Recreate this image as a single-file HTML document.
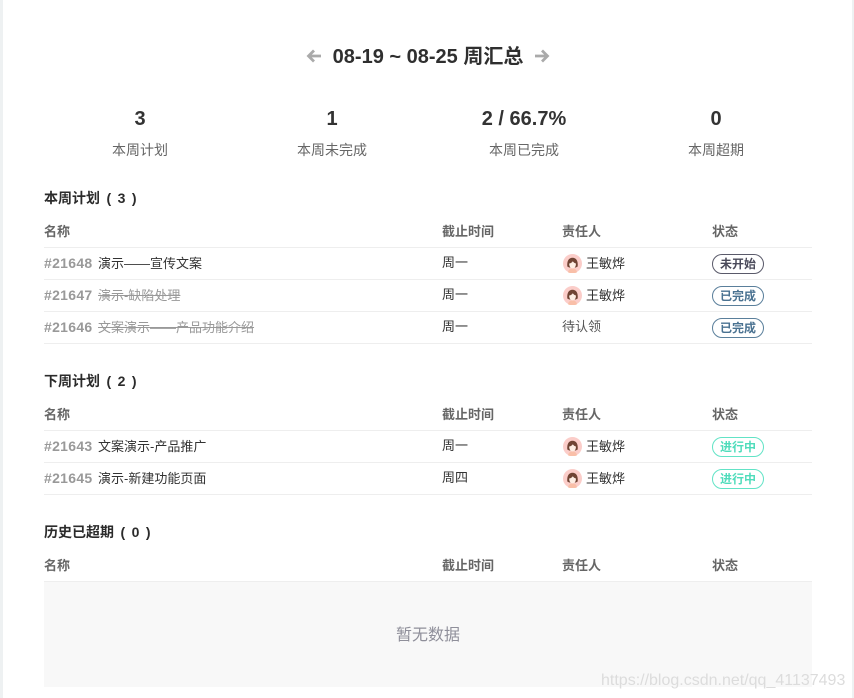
<!DOCTYPE html>
<html lang="zh">
<head>
<meta charset="utf-8">
<style>
html,body{margin:0;padding:0;background:#fff}
body{width:854px;height:698px;position:relative;overflow:hidden;font-family:"Liberation Sans","Noto Sans CJK SC",sans-serif;color:#333;font-size:13px}
.a{position:absolute;white-space:nowrap;line-height:20px}
.c{transform:translateX(-50%)}
.h{font-weight:bold;color:#2b2b2b;font-size:14px;word-spacing:2.600px}
.th{font-weight:bold;color:#666;font-size:13px}
.l{position:absolute;left:44px;width:768px;height:1px;background:#eeeeee}
.id{font-weight:bold;color:#999;font-size:14px;letter-spacing:.3px;margin-right:5.500px}
.s{color:#999;text-decoration:line-through}
.b{position:absolute;left:712px;width:50px;height:18px;border:1px solid;border-radius:10px;text-align:center;font-size:12px;font-weight:bold;line-height:18px}
.av{position:absolute;left:563px;width:19px;height:19px}
.n{font-size:20px;font-weight:bold;line-height:22px;top:108px}
.m{top:140px;color:#666;font-size:14px}
</style>
</head>
<body>
<div style="position:absolute;left:0;top:0;width:3px;height:698px;background:#eef1f2"></div>
<div style="position:absolute;left:852px;top:0;width:2px;height:698px;background:#eef1f2"></div>

<svg style="position:absolute;left:306px;top:48px" width="16" height="16" viewBox="0 0 16 16"><path d="M8 2.500L2.500 8L8 13.500M3 8H15" fill="none" stroke="#aaa" stroke-width="2.800"/></svg>
<div class="a c" style="left:428px;top:46px;font-size:20px;font-weight:bold;line-height:22px;color:#2f2f2f">08-19 ~ 08-25 周汇总</div>
<svg style="position:absolute;left:534px;top:48px" width="16" height="16" viewBox="0 0 16 16"><path d="M8 2.500L13.500 8L8 13.500M13 8H1" fill="none" stroke="#aaa" stroke-width="2.800"/></svg>

<div class="a c n" style="left:140px">3</div>
<div class="a c n" style="left:332px">1</div>
<div class="a c n" style="left:524px">2 / 66.7%</div>
<div class="a c n" style="left:716px">0</div>
<div class="a c m" style="left:140px">本周计划</div>
<div class="a c m" style="left:332px">本周未完成</div>
<div class="a c m" style="left:524px">本周已完成</div>
<div class="a c m" style="left:716px">本周超期</div>

<svg width="0" height="0" style="position:absolute"><defs>
<g id="face"><circle cx="9.500" cy="9.500" r="9.500" fill="#fbcdc9"/><path d="M5 18.200c.5-2.800 2.500-3.700 4.500-3.700s4 .9 4.500 3.700a9.500 9.500 0 0 1-9 0z" fill="#f9bfa8"/><path d="M4.300 12.500C3.800 7 5.800 3.800 9.500 3.800s5.700 3.200 5.200 8.700L12.800 13.500H6.200z" fill="#704434"/><path d="M6.200 9.500C7.800 9.300 9 8.500 9.800 7.300c.7 1.100 1.800 2 3.100 2.200.2 2.900-1.300 4.900-3.300 4.900s-3.500-2-3.400-4.900z" fill="#fdeee4"/></g>
</defs></svg>

<!-- Section 1 -->
<div class="a h" style="left:44px;top:188px">本周计划 ( 3 )</div>
<div class="a th" style="left:44px;top:222px">名称</div><div class="a th" style="left:442px;top:222px">截止时间</div><div class="a th" style="left:562px;top:222px">责任人</div><div class="a th" style="left:712px;top:222px">状态</div>
<div class="l" style="top:247px"></div>
<div class="a" style="left:44px;top:253px"><span class="id">#21648</span>演示——宣传文案</div>
<div class="a" style="left:442px;top:253px">周一</div>
<svg class="av" style="top:254px" viewBox="0 0 19 19"><use href="#face"/></svg>
<div class="a" style="left:586px;top:254px">王敏烨</div>
<div class="b" style="top:254px;color:#4a4a5a;border-color:#5a5a6a">未开始</div>
<div class="l" style="top:279px"></div>

<div class="a" style="left:44px;top:285px"><span class="id">#21647</span><span class="s">演示-缺陷处理</span></div>
<div class="a" style="left:442px;top:285px">周一</div>
<svg class="av" style="top:286px" viewBox="0 0 19 19"><use href="#face"/></svg>
<div class="a" style="left:586px;top:286px">王敏烨</div>
<div class="b" style="top:286px;color:#4a7291;border-color:#5a7f9b">已完成</div>
<div class="l" style="top:311px"></div>

<div class="a" style="left:44px;top:317px"><span class="id">#21646</span><span class="s">文案演示——产品功能介绍</span></div>
<div class="a" style="left:442px;top:317px">周一</div>
<div class="a" style="left:562px;top:317px;color:#555">待认领</div>
<div class="b" style="top:318px;color:#4a7291;border-color:#5a7f9b">已完成</div>
<div class="l" style="top:343px"></div>

<!-- Section 2 -->
<div class="a h" style="left:44px;top:371px">下周计划 ( 2 )</div>
<div class="a th" style="left:44px;top:405px">名称</div><div class="a th" style="left:442px;top:405px">截止时间</div><div class="a th" style="left:562px;top:405px">责任人</div><div class="a th" style="left:712px;top:405px">状态</div>
<div class="l" style="top:430px"></div>
<div class="a" style="left:44px;top:436px"><span class="id">#21643</span>文案演示-产品推广</div>
<div class="a" style="left:442px;top:436px">周一</div>
<svg class="av" style="top:437px" viewBox="0 0 19 19"><use href="#face"/></svg>
<div class="a" style="left:586px;top:437px">王敏烨</div>
<div class="b" style="top:437px;color:#4fdcbb;border-color:#62e3c6">进行中</div>
<div class="l" style="top:462px"></div>

<div class="a" style="left:44px;top:468px"><span class="id">#21645</span>演示-新建功能页面</div>
<div class="a" style="left:442px;top:468px">周四</div>
<svg class="av" style="top:469px" viewBox="0 0 19 19"><use href="#face"/></svg>
<div class="a" style="left:586px;top:469px">王敏烨</div>
<div class="b" style="top:469px;color:#4fdcbb;border-color:#62e3c6">进行中</div>
<div class="l" style="top:494px"></div>

<!-- Section 3 -->
<div class="a h" style="left:44px;top:522px">历史已超期 ( 0 )</div>
<div class="a th" style="left:44px;top:556px">名称</div><div class="a th" style="left:442px;top:556px">截止时间</div><div class="a th" style="left:562px;top:556px">责任人</div><div class="a th" style="left:712px;top:556px">状态</div>
<div class="l" style="top:581px"></div>
<div style="position:absolute;left:44px;top:582px;width:768px;height:105px;background:#f8f8f8"></div>
<div class="a c" style="left:428px;top:626px;font-size:16px;color:#8f8f9a">暂无数据</div>

<div class="a" style="left:601px;top:671px;font-size:16px;color:#dcdcdc">https://blog.csdn.net/qq_41137493</div>
</body>
</html>
